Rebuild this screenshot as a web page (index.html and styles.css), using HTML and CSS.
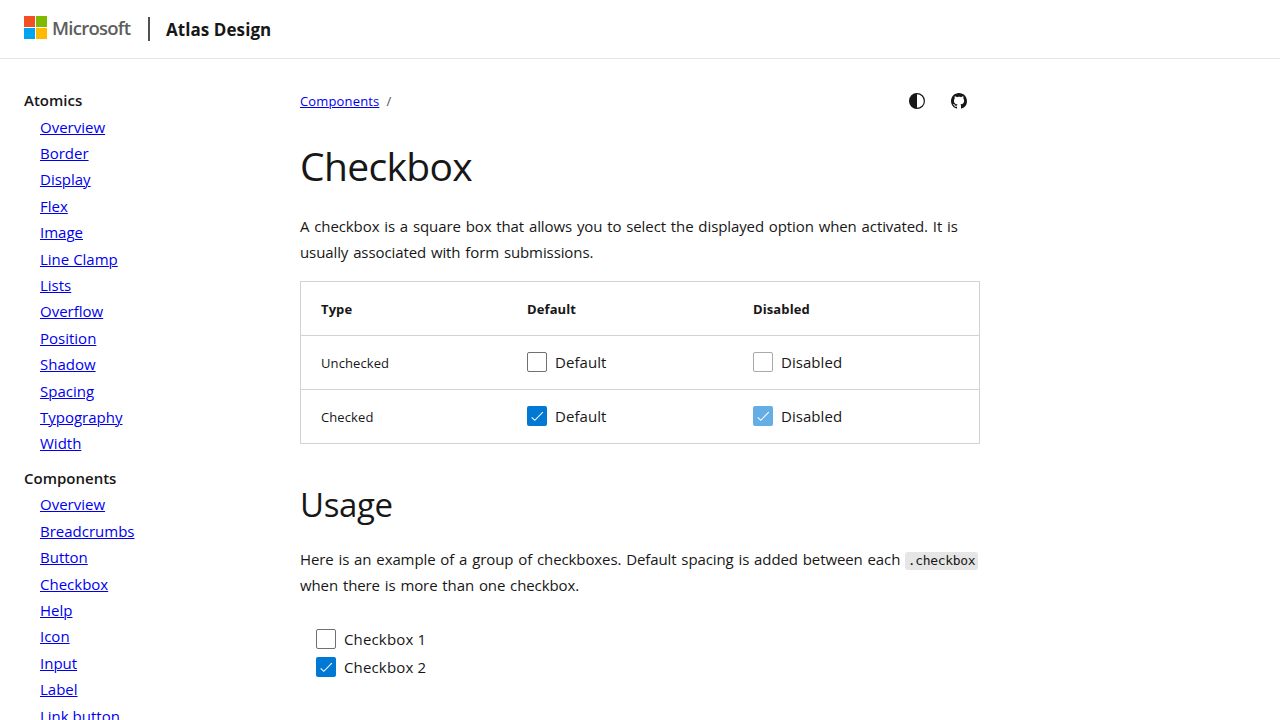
FILE: index.html
```html
<!DOCTYPE html>
<html lang="en">
<head>
<meta charset="utf-8">
<title>Checkbox - Atlas Design</title>
<link rel="stylesheet" href="styles.css">
</head>
<body>
<header class="header">
  <div class="logo">
    <svg class="logo-mark" width="23" height="23" viewBox="0 0 23 23">
      <path fill="#f25022" d="M0 0h11v11H0z"/>
      <path fill="#7fba00" d="M12 0h11v11H12z"/>
      <path fill="#00a4ef" d="M0 12h11v11H0z"/>
      <path fill="#ffb900" d="M12 12h11v11H12z"/>
    </svg>
    <span class="logo-text">Microsoft</span>
  </div>
  <span class="header-divider"></span>
  <span class="site-name">Atlas Design</span>
</header>
<div class="layout">
  <nav class="sidebar">
    <p class="nav-title">Atomics</p>
    <ul class="nav-list">
      <li><a href="#">Overview</a></li>
      <li><a href="#">Border</a></li>
      <li><a href="#">Display</a></li>
      <li><a href="#">Flex</a></li>
      <li><a href="#">Image</a></li>
      <li><a href="#">Line Clamp</a></li>
      <li><a href="#">Lists</a></li>
      <li><a href="#">Overflow</a></li>
      <li><a href="#">Position</a></li>
      <li><a href="#">Shadow</a></li>
      <li><a href="#">Spacing</a></li>
      <li><a href="#">Typography</a></li>
      <li><a href="#">Width</a></li>
    </ul>
    <p class="nav-title">Components</p>
    <ul class="nav-list">
      <li><a href="#">Overview</a></li>
      <li><a href="#">Breadcrumbs</a></li>
      <li><a href="#">Button</a></li>
      <li><a href="#">Checkbox</a></li>
      <li><a href="#">Help</a></li>
      <li><a href="#">Icon</a></li>
      <li><a href="#">Input</a></li>
      <li><a href="#">Label</a></li>
      <li><a href="#">Link button</a></li>
    </ul>
  </nav>
  <main class="content">
    <div class="topbar">
      <div class="breadcrumbs"><a href="#">Components</a><span class="slash">/</span></div>
      <div class="actions">
        <svg width="16" height="16" viewBox="0 0 16 16"><circle cx="8" cy="8" r="7.4" fill="none" stroke="#171717" stroke-width="1.2"/><path fill="#171717" d="M8 .6a7.4 7.4 0 0 0 0 14.8z"/></svg>
        <svg width="16" height="16" viewBox="0 0 16 16"><path fill="#171717" d="M8 0C3.58 0 0 3.58 0 8c0 3.54 2.29 6.53 5.47 7.59.4.07.55-.17.55-.38 0-.19-.01-.82-.01-1.49-2.01.37-2.53-.49-2.69-.94-.09-.23-.48-.94-.82-1.13-.28-.15-.68-.52-.01-.53.63-.01 1.08.58 1.23.82.72 1.21 1.87.87 2.33.66.07-.52.28-.87.51-1.07-1.78-.2-3.64-.89-3.64-3.95 0-.87.31-1.59.82-2.15-.08-.2-.36-1.02.08-2.12 0 0 .67-.21 2.2.82.64-.18 1.32-.27 2-.27s1.36.09 2 .27c1.53-1.04 2.2-.82 2.2-.82.44 1.1.16 1.92.08 2.12.51.56.82 1.27.82 2.15 0 3.07-1.87 3.75-3.65 3.95.29.25.54.73.54 1.48 0 1.07-.01 1.93-.01 2.2 0 .21.15.46.55.38A8.01 8.01 0 0 0 16 8c0-4.42-3.58-8-8-8z"/></svg>
      </div>
    </div>
    <h1 class="title">Checkbox</h1>
    <p class="text intro">A checkbox is a square box that allows you to select the displayed option when activated. It is<br>usually associated with form submissions.</p>
    <div class="table">
      <div class="row head"><span>Type</span><span>Default</span><span>Disabled</span></div>
      <div class="row">
        <span class="type">Unchecked</span>
        <label class="checkbox"><span class="box"></span><span>Default</span></label>
        <label class="checkbox"><span class="box disabled"></span><span>Disabled</span></label>
      </div>
      <div class="row">
        <span class="type">Checked</span>
        <label class="checkbox"><span class="box checked"><svg class="tick" viewBox="0 0 20 20"><path d="M4.7 11.3 7.8 14.3 15.8 6.2"/></svg></span><span>Default</span></label>
        <label class="checkbox"><span class="box checked disabled"><svg class="tick" viewBox="0 0 20 20"><path d="M4.7 11.3 7.8 14.3 15.8 6.2"/></svg></span><span>Disabled</span></label>
      </div>
    </div>
    <h2 class="subtitle">Usage</h2>
    <p class="text usage">Here is an example of a group of checkboxes. Default spacing is added between each <code class="code">.checkbox</code><br>when there is more than one checkbox.</p>
    <div class="group">
      <label class="checkbox"><span class="box"></span><span class="group-label">Checkbox 1</span></label>
      <label class="checkbox"><span class="box checked"><svg class="tick" viewBox="0 0 20 20"><path d="M4.7 11.3 7.8 14.3 15.8 6.2"/></svg></span><span class="group-label">Checkbox 2</span></label>
    </div>
  </main>
</div>
</body>
</html>
```
FILE: styles.css
```css
* { box-sizing: border-box; margin: 0; padding: 0; }
html, body { height: 720px; overflow: hidden; }
body {
  background: #fff;
  color: #171717;
  font-family: "Segoe UI", "Open Sans", "Noto Sans", sans-serif;
  font-size: 15px;
  font-weight: 400;
  line-height: 26.4px;
}
a { color: #00e; text-underline-offset: 1px; text-decoration-thickness: 1px; }
.header {
  display: flex;
  align-items: center;
  height: 59px;
  padding: 0 24px 1px;
  border-bottom: 1px solid #e6e6e6;
}
.logo { display: flex; align-items: center; gap: 5px; width: 109px; height: 28px; margin-top: -2px; }
.logo-mark { flex: none; display: block; }
.logo-text { font-size: 18.5px; font-weight: 600; letter-spacing: -0.75px; line-height: 28px; color: #5e5e5e; }
.header-divider { width: 2px; height: 24px; margin: 0 16px 0 15px; background: #505050; }
.site-name { padding-top: 3px; font-size: 17px; font-weight: 700; letter-spacing: 0.07px; }
.layout { display: flex; }
.sidebar { width: 276px; padding: 28.2px 0 0 24px; }
.nav-title { font-weight: 600; }
.nav-list { list-style: none; padding-left: 16px; margin-bottom: 8px; }
.content { width: 704px; padding: 20px 0 0 24px; }
.topbar { display: flex; justify-content: space-between; align-items: center; height: 44px; }
.breadcrumbs { display: flex; gap: 7px; font-size: 13px; letter-spacing: 0.15px; }
.slash { color: #505050; }
.actions { display: flex; gap: 26px; padding-right: 13px; }
.actions svg { display: block; }
.title { margin-top: 17px; font-size: 39px; font-weight: 400; line-height: 52px; letter-spacing: -0.65px; }
.text { white-space: nowrap; letter-spacing: -0.1px; word-spacing: 1.07px; }
.intro { margin-top: 21px; }
.table { margin-top: 15px; border: 1px solid #d2d2d2; }
.row { display: grid; grid-template-columns: 206px 226px 1fr; align-items: center; height: 54px; padding-left: 20px; }
.row + .row { border-top: 1px solid #d2d2d2; }
.head { height: 53px; padding-top: 1px; font-size: 13px; font-weight: 700; letter-spacing: 0.1px; }
.type { padding-top: 1px; font-size: 13px; letter-spacing: 0.1px; }
.checkbox { display: flex; align-items: center; gap: 8px; height: 20px; letter-spacing: 0.05px; }
.box { flex: none; width: 20px; height: 20px; border: 1px solid #707070; border-radius: 2px; }
.checked { border: 0; background: #0078d4; }
.disabled { opacity: .6; }
.tick { display: block; width: 20px; height: 20px; fill: none; stroke: #fff; stroke-width: 1.1; }
.subtitle { margin-top: 39.5px; font-size: 33px; font-weight: 400; line-height: 44px; letter-spacing: -0.4px; }
.usage { margin-top: 18.5px; }
.code { display: inline-block; height: 18px; padding: 0 2.5px; border-radius: 3px; background: #e6e6e6; font: 400 13px/18px "Consolas", "DejaVu Sans Mono", monospace; letter-spacing: -0.3px; word-spacing: 0; }
.group { display: flex; flex-direction: column; gap: 8px; margin-top: 30px; padding-left: 16px; }
.group-label { padding-top: 1px; letter-spacing: 0.15px; }
```
